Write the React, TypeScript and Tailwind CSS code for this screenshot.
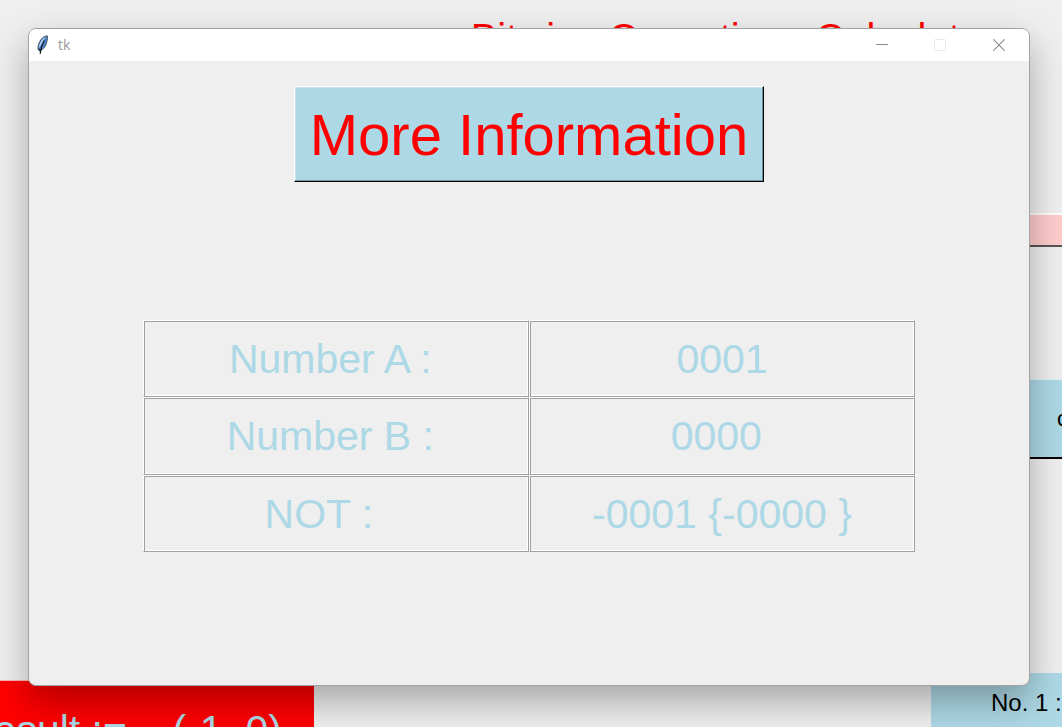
import React from "react";

type Row = { id: string; label: string; value: string };

const rows: Row[] = [
  { id: "number-a", label: "Number A : ", value: "0001" },
  { id: "number-b", label: "Number B : ", value: "0000 " },
  { id: "not", label: "NOT :   ", value: "-0001 {-0000 }" },
];

const cell =
  "w-1/2 border border-t-white border-l-white border-r-[#a0a0a0] border-b-[#a0a0a0] p-0 pt-0.5 text-center font-normal whitespace-pre shadow-[inset_1px_1px_0_#a0a0a0,inset_-1px_-1px_0_#ffffff]";

function Feather() {
  return (
    <svg width="14" height="20" viewBox="0 0 14 20" aria-hidden="true">
      <path
        d="M11.3 .8 C8.2 .9 5.2 3.6 3.5 7 C2.2 9.8 1.5 12.8 2.3 14.6 L3.6 16.2 L5.6 14.8 C8.3 13.4 10 10.5 10.7 7.5 C11.3 5 11.9 2.8 11.3 .8Z"
        fill="#4a80c8"
        stroke="#4a5058"
        strokeWidth=".9"
      />
      <path d="M9.8 2 C7 3 4.4 6.5 3.2 10.5 L3 13.5 C4.7 9.5 7.4 5.5 9.8 2Z" fill="#b9d5f2" />
      <path d="M8.3 5.5 C6.6 8.5 4.8 12 4.1 19" fill="none" stroke="#111111" strokeWidth="1.1" />
      <path d="M2.8 13.5 L4 15.8 L6 14.2" fill="none" stroke="#111111" strokeWidth="1" />
    </svg>
  );
}

function Calculator() {
  return (
    <div className="absolute inset-0 flex flex-col overflow-hidden bg-[#efefef]">
      <h1 className="ml-[404px] pt-[15px] text-center text-[40px] leading-[47px] whitespace-nowrap text-[#ff0000]">
        Bitwise Operations Calculator
      </h1>
      <div className="flex flex-1 items-start justify-between">
        <div className="mt-[618px] h-20 w-[314px] overflow-hidden border-t border-[#ffb0b0] bg-[#ff0000] pt-[26px]">
          <p className="-ml-9 text-[41px] leading-[47px] whitespace-pre text-[#add8e6]">
            {"Result :=    (-1, 0)"}
          </p>
        </div>
        <div className="flex w-[131px] flex-col pt-[151px]">
          <div className="h-[34px] border-t-2 border-b-2 border-t-white border-b-[#555555] bg-[#ffcccc]" />
          <button
            type="button"
            className="mt-[132px] h-20 border-t border-b-2 border-t-[#dff3f8] border-b-black bg-[#add8e6] pl-[126px] text-left text-[22px] leading-6 whitespace-nowrap text-black"
          >
            c
          </button>
          <p className="mt-[214px] h-20 bg-[#add8e6] pt-4 pl-[60px] text-[24px] leading-7 whitespace-nowrap text-black">
            No. 1 :
          </p>
        </div>
      </div>
    </div>
  );
}

function TitleBar() {
  return (
    <header className="flex h-8 items-center bg-white pl-[7px] text-[#999999]">
      <Feather />
      <span className="ml-2 flex-1 font-['Open_Sans',sans-serif] text-[14px] leading-5">tk</span>
      <button type="button" aria-label="Minimize" className="flex h-8 w-[58px] items-center justify-center">
        <svg width="12" height="12" viewBox="0 0 12 12">
          <path d="M0 5.5H12" stroke="#8c8c8c" />
        </svg>
      </button>
      <button type="button" disabled aria-label="Maximize" className="flex h-8 w-[58px] items-center justify-center">
        <svg width="12" height="12" viewBox="0 0 12 12">
          <rect x=".5" y=".5" width="11" height="11" rx="1" fill="none" stroke="#e8e8e8" />
        </svg>
      </button>
      <button type="button" aria-label="Close" className="flex h-8 w-[60px] items-center justify-center">
        <svg width="12" height="12" viewBox="0 0 12 12">
          <path d="M.3 .3L11.7 11.7M11.7 .3L.3 11.7" stroke="#8c8c8c" strokeWidth="1.1" />
        </svg>
      </button>
    </header>
  );
}

export default function App() {
  return (
    <div className="relative min-h-screen overflow-hidden pt-7 pr-8 pb-[41px] pl-7 font-['Liberation_Sans',Arial,sans-serif]">
      <Calculator />
      <main className="relative overflow-hidden rounded-lg border border-[#a3a3a3] bg-[#efefef] shadow-[0_16px_36px_rgba(0,0,0,0.3)]">
        <TitleBar />
        <div className="flex flex-col items-center pt-[25px] pb-[133px]">
          <button
            type="button"
            className="h-24 border border-t-white border-r-black border-b-black border-l-white bg-[#add8e6] px-[15px] pt-0.5 text-[58px] leading-[68px] whitespace-nowrap text-[#ff0000] shadow-[inset_-1px_-1px_0_#6f929d,inset_1px_1px_0_#c5e6ef]"
          >
            More Information
          </button>
          <table className="mt-[138px] h-[232px] w-[772px] max-w-full table-fixed border-separate border-spacing-0 text-[41px] leading-[47px] text-[#add8e6]">
            <tbody>
              {rows.map((row) => (
                <tr key={row.id}>
                  <th scope="row" className={cell}>
                    <label htmlFor={row.id}>{row.label}</label>
                  </th>
                  <td className={cell}>
                    <input
                      id={row.id}
                      defaultValue={row.value}
                      className="block h-[47px] w-full bg-transparent text-center outline-none"
                    />
                  </td>
                </tr>
              ))}
            </tbody>
          </table>
        </div>
      </main>
    </div>
  );
}
